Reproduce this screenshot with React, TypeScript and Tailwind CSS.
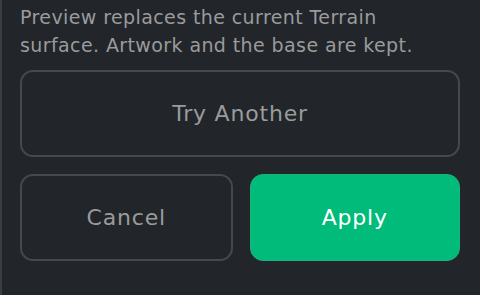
export default function App() {
  return (
    <div
      className="h-[295px] w-[480px] overflow-hidden border-l-2 border-[#3a3d41] bg-[#222529] pl-[18px] pr-[20px]"
      style={{ fontFamily: "'DejaVu Sans', 'Noto Sans', sans-serif" }}
    >
      <p className="max-w-[410px] pt-[3px] text-[19px] leading-[28px] tracking-[0.4px] text-[#9a9b9d]">
        Preview replaces the current Terrain surface. Artwork and the base are kept.
      </p>

      <button className="mt-[11px] flex h-[87px] w-full items-center justify-center rounded-[13px] border-2 border-[#45484c] text-[22px] tracking-[0.8px] text-[#9a9b9d]">
        Try Another
      </button>

      <div className="mt-[17px] flex gap-[17px]">
        <button className="flex h-[87px] flex-1 items-center justify-center rounded-[13px] border-2 border-[#45484c] text-[22px] tracking-[0.8px] text-[#9a9b9d]">
          Cancel
        </button>
        <button className="flex h-[87px] flex-1 items-center justify-center rounded-[13px] border border-[#1fb37c] bg-[#00bb7a] text-[22px] tracking-[0.8px] text-white">
          Apply
        </button>
      </div>
    </div>
  );
}
